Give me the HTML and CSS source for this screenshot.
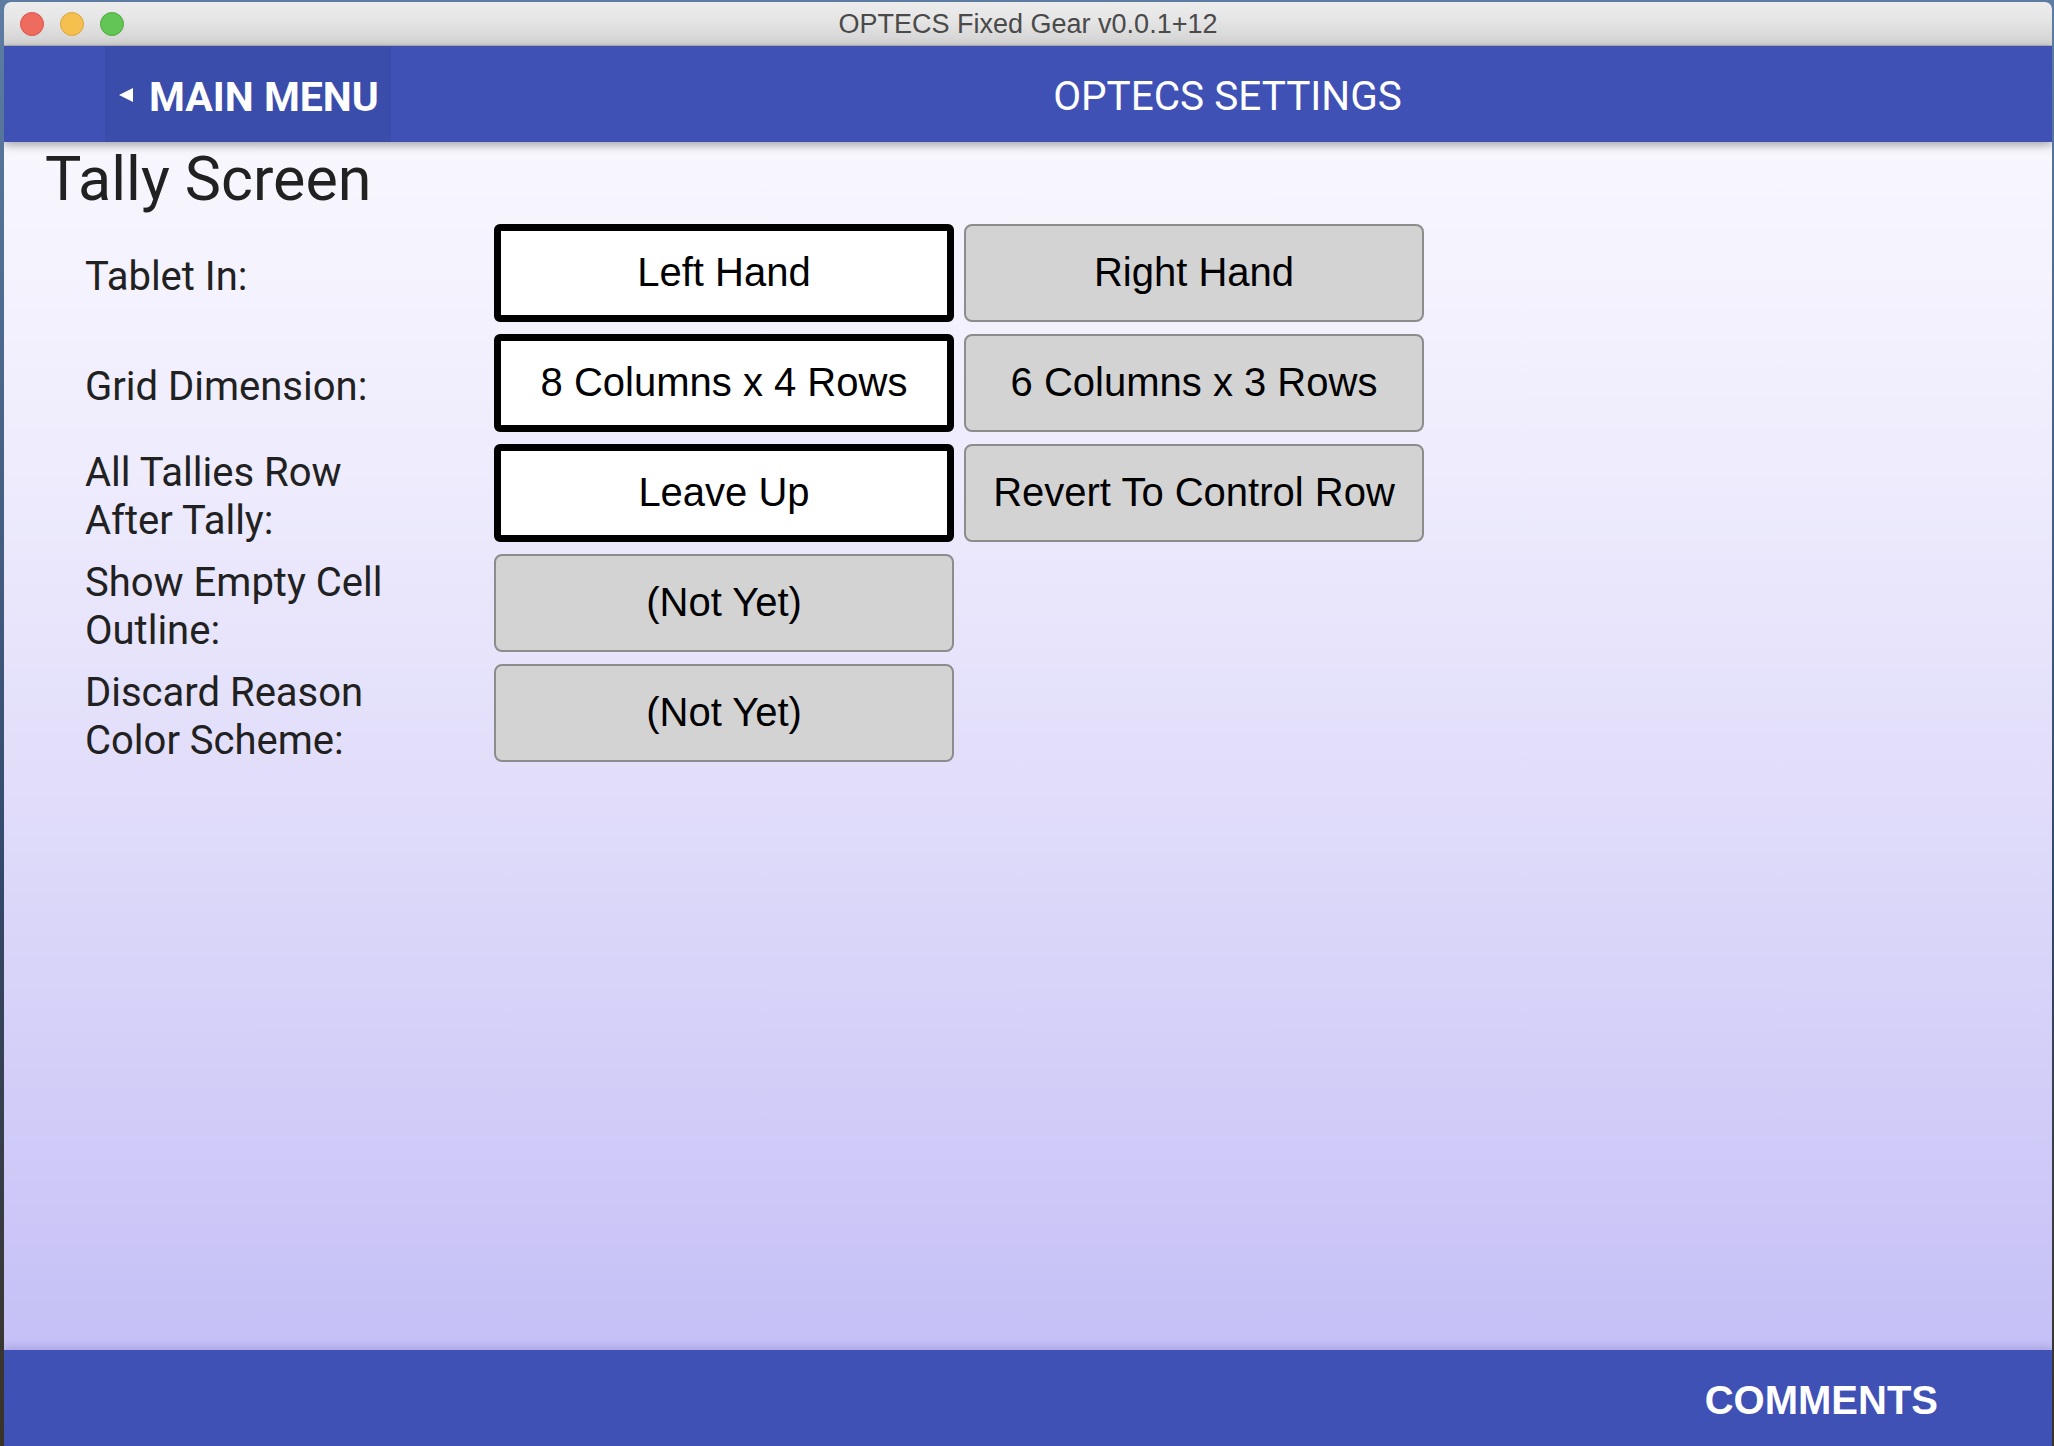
FILE: index.html
```html
<!DOCTYPE html>
<html lang="en">
<head>
<meta charset="utf-8">
<title>OPTECS Fixed Gear v0.0.1+12</title>
<link rel="stylesheet" href="styles.css">
</head>
<body>
<div class="window">
  <div class="titlebar">
    <div class="lights">
      <span class="light red"></span>
      <span class="light yellow"></span>
      <span class="light green"></span>
    </div>
    <div class="wintitle">OPTECS Fixed Gear v0.0.1+12</div>
    <div></div>
  </div>
  <header class="appbar">
    <div class="back"><span class="tri"></span><span class="back-text">MAIN MENU</span></div>
    <div class="apptitle">OPTECS SETTINGS</div>
  </header>
  <main class="content">
    <h1 class="page-title">Tally Screen</h1>
    <div class="form">
      <div class="label">Tablet In:</div>
      <div class="btn sel">Left Hand</div>
      <div class="btn">Right Hand</div>

      <div class="label">Grid Dimension:</div>
      <div class="btn sel">8 Columns x 4 Rows</div>
      <div class="btn">6 Columns x 3 Rows</div>

      <div class="label">All Tallies Row<br>After Tally:</div>
      <div class="btn sel">Leave Up</div>
      <div class="btn">Revert To Control Row</div>

      <div class="label">Show Empty Cell<br>Outline:</div>
      <div class="btn">(Not Yet)</div>
      <div class="empty"></div>

      <div class="label">Discard Reason<br>Color Scheme:</div>
      <div class="btn">(Not Yet)</div>
      <div class="empty"></div>
    </div>
  </main>
  <footer class="bottombar">
    <div class="comments">COMMENTS</div>
  </footer>
</div>
</body>
</html>
```

FILE: styles.css
```css
html, body {
  margin: 0;
  padding: 0;
  height: 100%;
}
body {
  background: linear-gradient(180deg, #5d7da3 0%, #34496b 60%, #3a3326 100%);
  overflow: hidden;
}
.window {
  margin: 2px 2px 0 4px;
  height: 1444px;
  display: flex;
  flex-direction: column;
  border-radius: 7px 7px 0 0;
  overflow: hidden;
  background: #3f51b5;
}
.titlebar {
  height: 43px;
  flex: 0 0 43px;
  border-bottom: 1px solid #b3b3b3;
  background: linear-gradient(180deg, #ececec 0%, #e6e6e6 40%, #d2d2d2 100%);
  display: grid;
  grid-template-columns: 1fr auto 1fr;
  align-items: center;
}
.lights {
  display: flex;
  gap: 16px;
  padding-left: 16px;
  align-items: center;
}
.light {
  width: 24px;
  height: 24px;
  border-radius: 50%;
  box-sizing: border-box;
}
.red { background: #ef6b5f; border: 1px solid #d8554b; }
.yellow { background: #f6c04f; border: 1px solid #d9a441; }
.green { background: #62c655; border: 1px solid #52a83f; }
.wintitle {
  font-family: "Liberation Sans", Arial, sans-serif;
  font-size: 27px;
  color: #4a4a4a;
  white-space: nowrap;
  padding-top: 2px;
}
.appbar {
  flex: 0 0 96px;
  height: 96px;
  display: flex;
  background: #3f51b5;
  position: relative;
  z-index: 2;
  box-shadow: 0 3px 9px rgba(0, 0, 0, 0.35);
}
.back {
  margin-left: 101px;
  width: 286px;
  background: #3b4dab;
  display: flex;
  align-items: center;
  box-sizing: border-box;
  padding-left: 14px;
  padding-top: 5px;
}
.tri {
  width: 0;
  height: 0;
  border-top: 7px solid transparent;
  border-bottom: 7px solid transparent;
  border-right: 14px solid #ffffff;
  margin-right: 16px;
  margin-top: -4px;
}
.back-text {
  font-family: Roboto, "Liberation Sans", sans-serif;
  font-weight: 700;
  font-size: 41px;
  color: #ffffff;
  white-space: nowrap;
}
.apptitle {
  flex: 1;
  display: flex;
  align-items: center;
  justify-content: center;
  padding-left: 12px;
  padding-top: 3px;
  font-family: Roboto, "Liberation Sans", sans-serif;
  font-size: 40.5px;
  color: #ffffff;
}
.content {
  flex: 1;
  background: linear-gradient(180deg, #f8f7fe 0%, #efedfd 25%, #e0dcfa 55%, #c5c0f6 100%);
  padding-left: 41px;
  position: relative;
  z-index: 1;
}
.page-title {
  margin: 1px 0 0 0;
  font-family: Roboto, "Liberation Sans", sans-serif;
  font-weight: 400;
  font-size: 61px;
  line-height: 72px;
  color: #212121;
}
.form {
  margin-top: 9px;
  margin-left: 40px;
  display: grid;
  grid-template-columns: 399px 460px 460px;
  grid-auto-rows: 98px;
  column-gap: 10px;
  row-gap: 12px;
}
.label {
  align-self: center;
  font-family: Roboto, "Liberation Sans", sans-serif;
  font-size: 40px;
  line-height: 48px;
  color: #212121;
  padding-top: 8px;
}
.btn {
  box-sizing: border-box;
  display: flex;
  align-items: center;
  justify-content: center;
  font-family: "Liberation Sans", Arial, sans-serif;
  font-size: 40px;
  color: #000000;
  background: #d3d3d3;
  border: 2px solid #8c8c8c;
  border-radius: 8px;
  white-space: nowrap;
  padding-bottom: 2px;
}
.btn.sel {
  background: #ffffff;
  border: 7px solid #000000;
  border-radius: 6px;
}
.bottombar {
  flex: 0 0 96px;
  height: 96px;
  background: #3f51b5;
  display: flex;
  align-items: center;
  justify-content: flex-end;
  padding-right: 114px;
  position: relative;
  z-index: 2;
  box-shadow: 0 -3px 8px rgba(40, 30, 120, 0.18);
}
.comments {
  font-family: "Liberation Sans", Arial, sans-serif;
  font-weight: 700;
  font-size: 40px;
  color: #ffffff;
  padding-top: 4px;
}
```
